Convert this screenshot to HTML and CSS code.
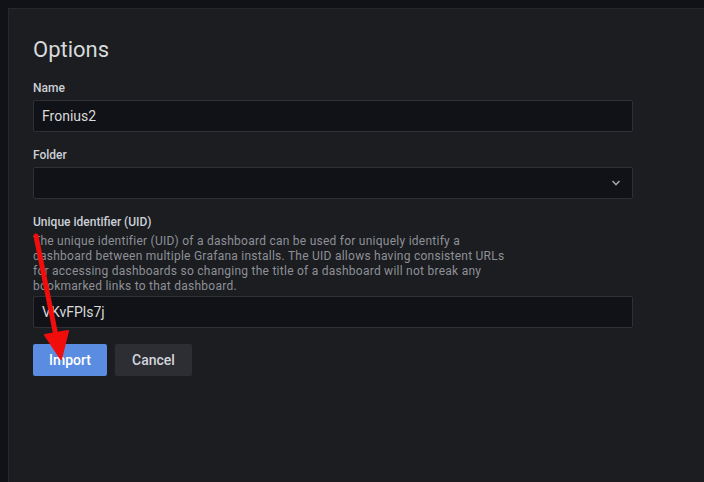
FILE: index.html
```html
<!DOCTYPE html>
<html>
<head>
<meta charset="utf-8">
<link rel="stylesheet" href="styles.css">
</head>
<body>
<div class="panel">
  <h3 class="title">Options</h3>
  <div class="field">
    <label class="label">Name</label>
    <div class="input"><span class="value">Fronius2</span></div>
  </div>
  <div class="field">
    <label class="label">Folder</label>
    <div class="input select">
      <span class="value"></span>
      <svg class="chev" width="10" height="6" viewBox="0 0 10 6"><path d="M1.5 1 L5 4.5 L8.5 1" fill="none" stroke="#9fa1a6" stroke-width="1.6"/></svg>
    </div>
  </div>
  <div class="field">
    <label class="label">Unique identifier (UID)</label>
    <p class="desc">The unique identifier (UID) of a dashboard can be used for uniquely identify a dashboard between multiple Grafana installs. The UID allows having consistent URLs for accessing dashboards so changing the title of a dashboard will not break any bookmarked links to that dashboard.</p>
    <div class="input"><span class="value">VKvFPls7j</span></div>
  </div>
  <div class="buttons">
    <button class="btn primary">Import</button>
    <button class="btn secondary">Cancel</button>
  </div>
</div>
<svg class="arrow" width="704" height="482" viewBox="0 0 704 482">
  <line x1="36" y1="236" x2="56" y2="336" stroke="#f20d0d" stroke-width="5" stroke-linecap="round"/>
  <polygon points="45,335 68,331 61,359" fill="#f20d0d" stroke="#f20d0d" stroke-width="2" stroke-linejoin="round"/>
</svg>
</body>
</html>
```
FILE: styles.css
```css
html, body {
  margin: 0;
  padding: 0;
  background: #111217;
  font-family: Roboto, "Liberation Sans", sans-serif;
  color: #d8d9da;
  overflow: hidden;
  height: 482px;
}
body {
  padding: 8px 0 0 8px;
  box-sizing: border-box;
  position: relative;
}
.panel {
  background: #1b1d21;
  border-top: 1px solid #26282d;
  border-left: 1px solid #26282d;
  height: 474px;
  padding: 28px 0 0 24px;
  box-sizing: border-box;
}
.title {
  margin: 0 0 18px 0;
  font-size: 22px;
  line-height: 26px;
  font-weight: 400;
  color: #d8d9da;
}
.field {
  width: 600px;
  margin-bottom: 16px;
}
.label {
  display: block;
  font-size: 12px;
  line-height: 15px;
  font-weight: 500;
  color: #ccd0d6;
  margin-bottom: 4px;
}
.input {
  height: 32px;
  box-sizing: border-box;
  border: 1px solid #2e3035;
  background: #111217;
  border-radius: 2px;
  display: flex;
  align-items: center;
  padding: 0 8px;
  font-size: 14px;
  color: #d8d9da;
}
.select {
  justify-content: space-between;
  padding-right: 11px;
}
.chev {
  display: block;
}
.desc {
  margin: 0 0 2px 0;
  width: 480px;
  font-size: 12px;
  line-height: 15px;
  color: #8e9096;
  letter-spacing: 0.25px;
}
.buttons {
  display: flex;
  gap: 8px;
  margin-top: 2px;
}
.btn {
  height: 32px;
  border: none;
  border-radius: 2px;
  font-family: Roboto, "Liberation Sans", sans-serif;
  font-size: 14px;
  font-weight: 500;
  padding: 0 16px;
  cursor: pointer;
}
.primary {
  background: #5a8ce2;
  color: #ffffff;
  width: 74px;
}
.secondary {
  background: #2d2e33;
  color: #d1d5db;
  width: 77px;
}
.arrow {
  position: absolute;
  left: 0;
  top: 0;
  pointer-events: none;
}
```
